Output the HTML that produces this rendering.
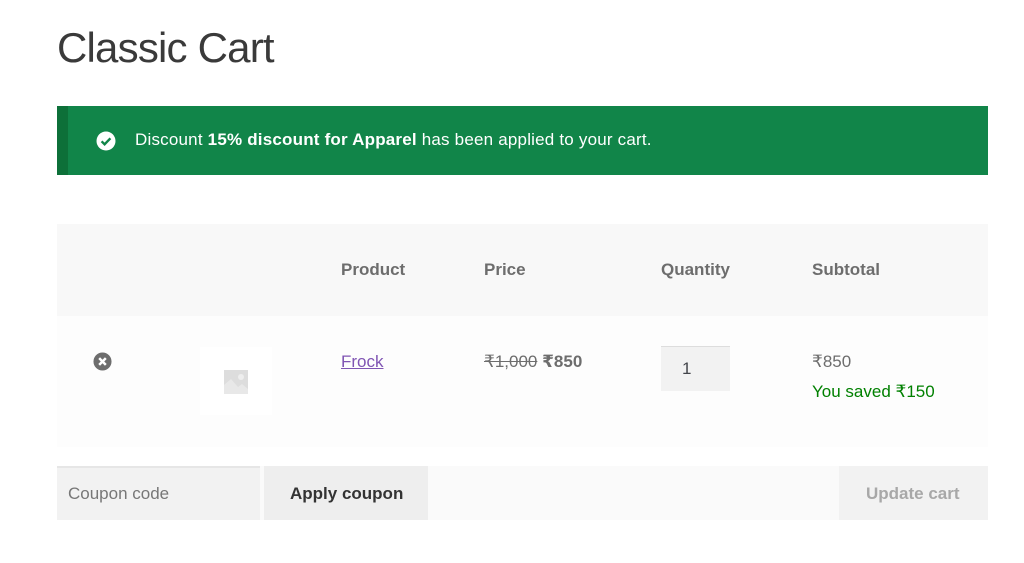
<!DOCTYPE html>
<html><head><meta charset="utf-8"><style>
body{margin:0;width:1024px;height:563px;background:#fff;font-family:"Liberation Sans","DejaVu Sans",sans-serif;position:relative;overflow:hidden;color:#6d6d6d}
.a{position:absolute;white-space:nowrap}
h1{position:absolute;left:57px;top:24px;margin:0;font-weight:300;font-size:42px;color:#3a3a3a;letter-spacing:-0.8px}
.ban{position:absolute;left:57px;top:106px;width:931px;height:69px;background:#118549;border-left:0}
.ban .bl{position:absolute;left:0;top:0;width:11px;height:69px;background:#0d7039}
.ban .t{position:absolute;left:78px;top:24px;color:#fff;font-size:17px;letter-spacing:0.2px}
.hd{position:absolute;left:57px;top:224px;width:931px;height:92px;background:#f8f8f8}
.rw{position:absolute;left:57px;top:316px;width:931px;height:131px;background:#fdfdfd}
.h{font-weight:bold;font-size:17px;color:#6d6d6d;top:260px}
.bt{position:absolute;left:57px;top:466px;width:931px;height:54px;background:#fafafa}
</style></head><body>
<h1>Classic Cart</h1>
<div class="ban"><div class="bl"></div>
<svg class="a" style="left:39px;top:25px" width="20" height="20" viewBox="0 0 20 20"><circle cx="10" cy="10" r="9.5" fill="#fff"/><path d="M5.6 10.3l3 3 5.8-6" stroke="#118549" stroke-width="2.4" fill="none"/></svg>
<div class="t">Discount <b>15% discount for Apparel</b> has been applied to your cart.</div></div>
<div class="hd"></div><div class="rw"></div>
<div class="a h" style="left:341px">Product</div>
<div class="a h" style="left:484px">Price</div>
<div class="a h" style="left:661px">Quantity</div>
<div class="a h" style="left:812px">Subtotal</div>
<svg class="a" style="left:93px;top:352px" width="19" height="19" viewBox="0 0 20 20"><circle cx="10" cy="10" r="9.5" fill="#6d6d6d"/><path d="M6.5 6.5l7 7M13.5 6.5l-7 7" stroke="#fff" stroke-width="2.6"/></svg>
<div class="a" style="left:200px;top:347px;width:72px;height:68px;background:#fff"></div>
<svg class="a" style="left:224px;top:370px" width="24" height="24" viewBox="0 0 24 24"><rect width="24" height="24" fill="#ddd"/><circle cx="17" cy="7" r="3" fill="#eee"/><path d="M0 15l7-6 7 8 4-3 6 5v5H0z" fill="#e8e8e8"/></svg>
<div class="a" style="left:341px;top:352px;font-size:17px;color:#7f54b3;text-decoration:underline">Frock</div>
<div class="a" style="left:484px;top:352px;font-size:17px;color:#6d6d6d"><s>₹1,000</s> <b>₹850</b></div>
<div class="a" style="left:661px;top:346px;width:69px;height:44px;background:#f2f2f2;border-top:1px solid #ddd"></div>
<div class="a" style="left:682px;top:359px;font-size:17px;color:#43454b">1</div>
<div class="a" style="left:812px;top:352px;font-size:17px">₹850</div>
<div class="a" style="left:812px;top:382px;font-size:17px;color:#008000">You saved ₹150</div>
<div class="bt"></div>
<div class="a" style="left:57px;top:466px;width:203px;height:54px;background:#f2f2f2;border-top:2px solid #e6e6e6;box-sizing:border-box"></div>
<div class="a" style="left:68px;top:484px;font-size:17px;color:#777">Coupon code</div>
<div class="a" style="left:264px;top:466px;width:164px;height:54px;background:#eee"></div>
<div class="a" style="left:290px;top:484px;font-size:17px;font-weight:bold;color:#333">Apply coupon</div>
<div class="a" style="left:839px;top:466px;width:149px;height:54px;background:#f2f2f2"></div>
<div class="a" style="left:866px;top:484px;font-size:17px;font-weight:bold;color:#a8a8a8">Update cart</div>
</body></html>
